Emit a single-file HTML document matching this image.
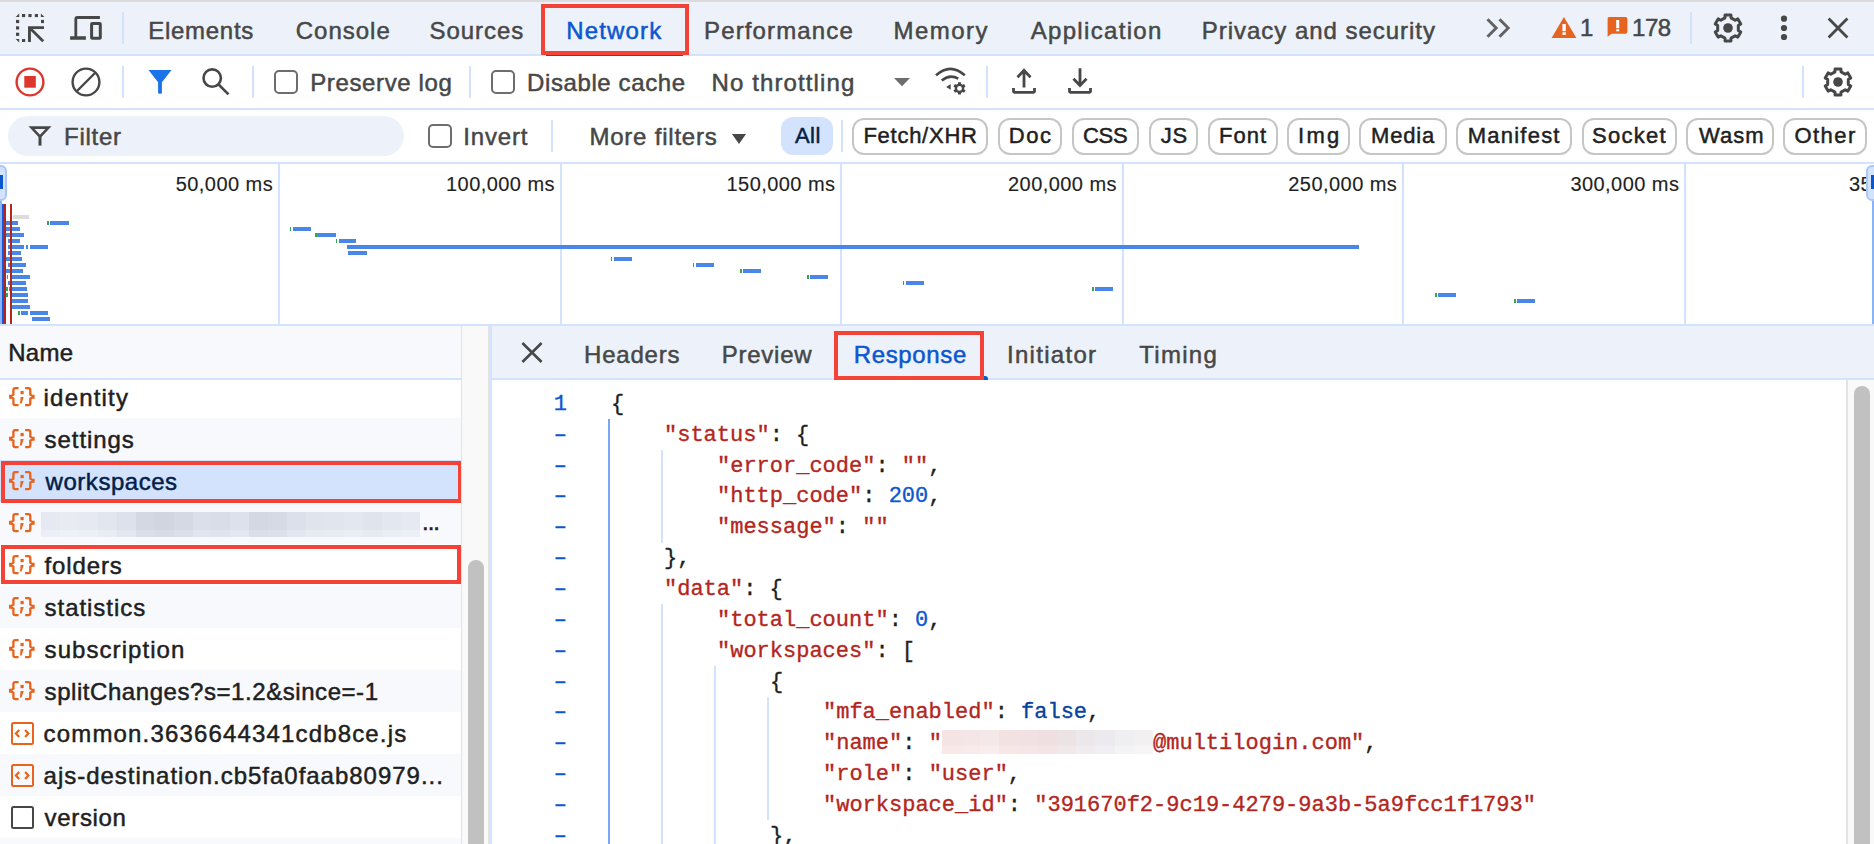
<!DOCTYPE html>
<html><head><meta charset="utf-8">
<style>
html,body{margin:0;padding:0;width:1874px;height:844px;overflow:hidden;background:#fff;}
body{position:relative;font-family:"Liberation Sans", sans-serif;}
.t{position:absolute;white-space:pre;line-height:1;font-family:"Liberation Sans", sans-serif;-webkit-text-stroke:0.5px currentColor;}
.ic{position:absolute;overflow:visible;}
.abs{position:absolute;}
.bar{position:absolute;}
.row{position:absolute;left:0;width:461px;}
.cl{position:absolute;white-space:pre;font-family:"Liberation Mono", monospace;font-size:22px;line-height:30.86px;color:#1f1f1f;-webkit-text-stroke:0.35px currentColor;}
.gl{position:absolute;left:540px;width:27px;text-align:right;font-family:"Liberation Mono", monospace;font-size:22px;line-height:30.86px;color:#0b57d0;-webkit-text-stroke:0.35px currentColor;}
.k,.s{color:#b3261e;}
.n{color:#0b57d0;}
.a{color:#0842a0;}
.p{color:#1f1f1f;}
.blur2{display:inline-block;height:24px;vertical-align:-0.5px;background:linear-gradient(90deg,#f4e4e4 0.0px 19.2px,#f4e6e6 19.2px 38.4px,#f4e8e8 38.4px 57.5px,#f2e2e2 57.5px 76.7px,#f1e1e2 76.7px 95.9px,#efdfe0 95.9px 115.1px,#ece3e5 115.1px 134.3px,#ebe7eb 134.3px 153.5px,#eceaee 153.5px 172.6px,#efeef0 172.6px 191.8px,#f3f0f2 191.8px 211.0px) 0 0/100% 16px no-repeat,linear-gradient(90deg,#f9e9e9 0.0px 19.2px,#f9ebeb 19.2px 38.4px,#f9eded 38.4px 57.5px,#f7e7e7 57.5px 76.7px,#f6e6e7 76.7px 95.9px,#f4e4e5 95.9px 115.1px,#f1e8ea 115.1px 134.3px,#f0ecf0 134.3px 153.5px,#f1eff3 153.5px 172.6px,#f4f3f5 172.6px 191.8px,#f8f5f7 191.8px 211.0px) 0 16px/100% 8px no-repeat;}
.guide{position:absolute;width:2px;}
.sep{position:absolute;width:2px;background:#d3e3fd;}
.chip{position:absolute;top:117.5px;height:37px;box-sizing:border-box;border:2px solid #c4c7c5;border-radius:12px;}
.cb{position:absolute;width:24px;height:24px;box-sizing:border-box;border:2px solid #6d6d6d;border-radius:5px;background:#fff;}
.redbox{position:absolute;box-sizing:border-box;border:4.5px solid #f44336;}
</style></head><body>
<!-- top gray line -->
<div class="abs" style="left:0;top:0;width:1874px;height:2px;background:#dcdcdc"></div>
<!-- tab bar -->
<div class="abs" style="left:0;top:2px;width:1874px;height:52px;background:#edf2fa"></div>
<div class="abs" style="left:0;top:54px;width:1874px;height:2px;background:#d3e3fd"></div>
<!-- row2 -->
<div class="abs" style="left:0;top:108px;width:1874px;height:2px;background:#d3e3fd"></div>
<!-- row3 border -->
<div class="abs" style="left:0;top:162px;width:1874px;height:2px;background:#d3e3fd"></div>
<!-- overview bottom border -->
<div class="abs" style="left:0;top:324px;width:1874px;height:2px;background:#d3e3fd"></div>

<!-- tab bar icons -->
<svg class="ic" style="left:0;top:0" width="120" height="56" viewBox="0 0 120 56" fill="#474747">
  <rect x="22" y="14" width="3.2" height="3.1"/><rect x="28.4" y="14" width="3.2" height="3.1"/><rect x="34.8" y="14" width="3.2" height="3.1"/>
  <path d="M19.2 13.6V17.1H15.7Z"/><path d="M40.9 13.6V17.1H44.4Z"/>
  <rect x="16" y="19.9" width="3.2" height="3.2"/><rect x="16" y="26.3" width="3.2" height="3.2"/><rect x="16" y="32.7" width="3.2" height="3.2"/>
  <path d="M15.7 39.1H19.2V42.6Z"/><rect x="22" y="39" width="3.2" height="3"/>
  <rect x="41" y="19.9" width="3" height="3.2"/>
  <path d="M28 26.2H44V28.9H32.8L44.2 40.2L42.2 42.2L30.9 30.9V42H28Z"/>
  <path d="M74.4 39.8V18.9Q74.4 15.9 77.4 15.9H99.9V18.9H77.2V36.2H85.9V39.8H70.1V36.2H74.4Z"/>
  <path d="M92.2 22H99.7Q101.8 22 101.8 24.1V37.7Q101.8 39.8 99.7 39.8H92.2Q90.1 39.8 90.1 37.7V24.1Q90.1 22 92.2 22ZM93.1 25V36.8H98.8V25Z"/>
</svg>
<div class="sep" style="left:122px;top:12px;height:32px"></div>
<!-- network red box + underline -->
<div class="abs" style="left:546px;top:52px;width:137px;height:4px;background:#0b57d0;border-radius:2px 2px 0 0"></div>
<div class="redbox" style="left:541px;top:4px;width:148px;height:51px"></div>
<!-- >> -->
<svg class="ic" style="left:1480px;top:14px" width="36" height="28" viewBox="0 0 36 28" fill="none" stroke="#626262" stroke-width="2.9"><path d="M7.5 5.2L16.2 14L7.5 22.8M19.5 5.2L28.2 14L19.5 22.8"/></svg>
<!-- warning -->
<svg class="ic" style="left:1551px;top:17px" width="26" height="22" viewBox="0 0 26 22"><path d="M12.9 0.1L25.4 20.9H0.6Z" fill="#e6641f"/><rect x="11.4" y="7" width="3.4" height="7.2" fill="#fff"/><rect x="11.4" y="15.3" width="3.4" height="2.6" fill="#fff"/></svg>
<!-- issue -->
<svg class="ic" style="left:1607px;top:17px" width="22" height="21" viewBox="0 0 22 21"><path d="M2 0.1H18.4Q20.4 0.1 20.4 2.1V14.8Q20.4 16.8 18.4 16.8H4.5L0.6 19.8V2.1Q0.6 0.1 2 0.1Z" fill="#e6641f"/><rect x="9.2" y="3" width="3" height="8.2" fill="#fff"/><rect x="9.2" y="12.3" width="3" height="2" fill="#fff"/></svg>
<div class="sep" style="left:1690px;top:12px;height:32px"></div>
<svg class="ic" style="left:1713px;top:13px" width="30" height="30" viewBox="0 0 30 30"><path d="M11.94 4.85 L12.08 1.92 L17.92 1.92 L18.06 4.85 L22.26 7.27 L24.86 5.93 L27.79 10.99 L25.32 12.58 L25.32 17.42 L27.79 19.01 L24.86 24.07 L22.26 22.73 L18.06 25.15 L17.92 28.08 L12.08 28.08 L11.94 25.15 L7.74 22.73 L5.14 24.07 L2.21 19.01 L4.68 17.42 L4.68 12.58 L2.21 10.99 L5.14 5.93 L7.74 7.27Z" fill="none" stroke="#474747" stroke-width="3" stroke-linejoin="round"/><circle cx="15.0" cy="15.0" r="4.8" fill="#474747"/></svg>
<svg class="ic" style="left:1774px;top:12px" width="20" height="32" viewBox="0 0 20 32" fill="#474747"><circle cx="10" cy="6.7" r="3.1"/><circle cx="10" cy="16" r="3.1"/><circle cx="10" cy="25" r="3.1"/></svg>
<svg class="ic" style="left:1824px;top:14px" width="28" height="28" viewBox="0 0 28 28" fill="none" stroke="#474747" stroke-width="2.8"><path d="M4.6 4.6L23.4 23.4M23.4 4.6L4.6 23.4"/></svg>

<!-- row 2 icons -->
<svg class="ic" style="left:14px;top:66px" width="32" height="32" viewBox="0 0 32 32"><circle cx="16" cy="16" r="13.4" fill="none" stroke="#dc362e" stroke-width="2.4"/><rect x="10.3" y="10" width="11.5" height="11.7" fill="#dc362e"/></svg>
<svg class="ic" style="left:70px;top:66px" width="32" height="32" viewBox="0 0 32 32" fill="none" stroke="#474747" stroke-width="2.4"><circle cx="16" cy="16" r="13.4"/><path d="M25.5 6.5L6.5 25.5"/></svg>
<div class="sep" style="left:122px;top:66px;height:32px"></div>
<svg class="ic" style="left:148px;top:70px" width="24" height="24" viewBox="0 0 24 24"><path d="M0.5 0H23.5L13.9 12.2V22.5Q13.9 23.7 12.7 23.7H11.3Q10.1 23.7 10.1 22.5V12.2Z" fill="#1a73e8"/></svg>
<svg class="ic" style="left:200px;top:66px" width="32" height="32" viewBox="0 0 32 32" fill="none" stroke="#474747" stroke-width="2.6"><circle cx="12.2" cy="12.1" r="8.7"/><path d="M18.6 18.5L28.5 28.3"/></svg>
<div class="sep" style="left:252px;top:66px;height:32px"></div>
<div class="cb" style="left:274px;top:70px"></div>
<div class="sep" style="left:469px;top:66px;height:32px"></div>
<div class="cb" style="left:491px;top:70px"></div>
<svg class="ic" style="left:893px;top:77px" width="18" height="10" viewBox="0 0 18 10"><path d="M1 1H17L9 9.2Z" fill="#6d6d6d"/></svg>
<svg class="ic" style="left:925px;top:60px" width="42" height="34" viewBox="925 60 42 34"><path d="M936 75.2Q950.4 62.4 964.8 75.2" fill="none" stroke="#474747" stroke-width="2.6"/><path d="M941.7 80.5Q949.8 73.8 958.3 78.6" fill="none" stroke="#474747" stroke-width="2.6"/><path d="M950.7 84L946.2 86.9L950.7 89.8Z" fill="#474747"/><path d="M958.04 83.83 L958.03 82.27 L960.97 82.27 L960.96 83.83 L962.73 84.85 L964.07 84.06 L965.54 86.61 L964.19 87.38 L964.19 89.42 L965.54 90.19 L964.07 92.74 L962.73 91.95 L960.96 92.97 L960.97 94.53 L958.03 94.53 L958.04 92.97 L956.27 91.95 L954.93 92.74 L953.46 90.19 L954.81 89.42 L954.81 87.38 L953.46 86.61 L954.93 84.06 L956.27 84.85Z" fill="#474747"/><circle cx="959.5" cy="88.4" r="2.4" fill="#fff"/></svg>
<div class="sep" style="left:986px;top:66px;height:32px"></div>
<svg class="ic" style="left:1005px;top:62px" width="95" height="38" viewBox="1005 62 95 38" fill="none" stroke="#474747" stroke-width="2.8"><path d="M1013.5 88.1V91.3Q1013.5 92.3 1014.5 92.3H1033.5Q1034.5 92.3 1034.5 91.3V88.1"/><path d="M1024 87.6V70.5M1017.5 77.2L1024 70.4L1030.5 77.2"/><path d="M1069.5 88.1V91.3Q1069.5 92.3 1070.5 92.3H1089.5Q1090.5 92.3 1090.5 91.3V88.1"/><path d="M1080 68.3V85.4M1073.5 78.7L1080 85.4L1086.5 78.7"/></svg>
<div class="sep" style="left:1802px;top:66px;height:32px"></div>
<svg class="ic" style="left:1823px;top:67px" width="30" height="30" viewBox="0 0 30 30"><path d="M11.94 4.85 L12.08 1.92 L17.92 1.92 L18.06 4.85 L22.26 7.27 L24.86 5.93 L27.79 10.99 L25.32 12.58 L25.32 17.42 L27.79 19.01 L24.86 24.07 L22.26 22.73 L18.06 25.15 L17.92 28.08 L12.08 28.08 L11.94 25.15 L7.74 22.73 L5.14 24.07 L2.21 19.01 L4.68 17.42 L4.68 12.58 L2.21 10.99 L5.14 5.93 L7.74 7.27Z" fill="none" stroke="#474747" stroke-width="3" stroke-linejoin="round"/><circle cx="15.0" cy="15.0" r="4.8" fill="#474747"/></svg>

<!-- row 3 -->
<div class="abs" style="left:8px;top:116px;width:396px;height:40px;border-radius:20px;background:#edf2fa"></div>
<svg class="ic" style="left:30px;top:126px" width="20" height="20" viewBox="0 0 20 20" fill="none" stroke="#474747" stroke-width="2.6"><path d="M1.5 1.6H18.5L10 10.6Z" stroke-linejoin="miter"/><path d="M10 10.6V19.6" stroke-width="3"/></svg>
<div class="cb" style="left:428px;top:124px"></div>
<div class="sep" style="left:551px;top:120px;height:32px"></div>
<svg class="ic" style="left:731px;top:133px" width="16" height="12" viewBox="0 0 16 12"><path d="M1 1H15L8 11Z" fill="#474747"/></svg>
<div class="abs" style="left:781px;top:117px;width:52px;height:38px;border-radius:12px;background:#d3e3fd"></div>
<div class="sep" style="left:841px;top:120px;height:32px"></div>
<div class="chip" style="left:851.7px;width:136.7px"></div><div class="chip" style="left:997.6px;width:64.4px"></div><div class="chip" style="left:1071.7px;width:67.3px"></div><div class="chip" style="left:1148.5px;width:49.5px"></div><div class="chip" style="left:1207.6px;width:70.8px"></div><div class="chip" style="left:1287.3px;width:62.7px"></div><div class="chip" style="left:1359.4px;width:88.0px"></div><div class="chip" style="left:1456.3px;width:116.0px"></div><div class="chip" style="left:1581.7px;width:95.3px"></div><div class="chip" style="left:1686.3px;width:87.7px"></div><div class="chip" style="left:1783.0px;width:84.2px"></div>

<!-- overview grid -->
<div class="abs" style="left:278px;top:164px;width:2px;height:160px;background:#d3e3fd"></div><div class="abs" style="left:560px;top:164px;width:2px;height:160px;background:#d3e3fd"></div><div class="abs" style="left:840px;top:164px;width:2px;height:160px;background:#d3e3fd"></div><div class="abs" style="left:1122px;top:164px;width:2px;height:160px;background:#d3e3fd"></div><div class="abs" style="left:1402px;top:164px;width:2px;height:160px;background:#d3e3fd"></div><div class="abs" style="left:1684px;top:164px;width:2px;height:160px;background:#d3e3fd"></div>
<span class="t" style="left:1849px;top:174.1px;font-size:20px;color:#1f1f1f;letter-spacing:0.45px;-webkit-text-stroke:0.15px currentColor">35</span>
<!-- overview handles -->
<div class="abs" style="left:-8px;top:164.5px;width:15px;height:36px;box-sizing:border-box;border:2px solid #a8c7fa;border-radius:6px;background:#d3e3fd"></div>
<div class="abs" style="left:0;top:175px;width:2.5px;height:14px;background:#0b57d0"></div>
<div class="abs" style="left:1866px;top:164.5px;width:16px;height:36px;box-sizing:border-box;border:2px solid #a8c7fa;border-radius:6px;background:#d3e3fd"></div>
<div class="abs" style="left:1871px;top:175px;width:3px;height:14px;background:#0b57d0"></div>
<div class="abs" style="left:1871.5px;top:201px;width:2.5px;height:123px;background:#8ab4f8"></div>
<div class="abs" style="left:0;top:201px;width:2px;height:123px;background:#8ab4f8"></div>
<div class="abs" style="left:2px;top:204px;width:2.2px;height:120px;background:#1a56db"></div>
<div class="abs" style="left:4.2px;top:204px;width:1.6px;height:120px;background:#b3261e"></div>
<div class="bar" style="left:12.6px;top:214.9px;width:16.7px;height:4px;background:#dcdcdc"></div>
<div class="bar" style="left:5.7px;top:220.9px;width:12.0px;height:4px;background:#4a86e8"></div>
<div class="bar" style="left:50.0px;top:220.9px;width:18.6px;height:4px;background:#4a86e8"></div>
<div class="bar" style="left:5.7px;top:226.7px;width:14.3px;height:4px;background:#4a86e8"></div>
<div class="bar" style="left:6.2px;top:232.9px;width:18.1px;height:4px;background:#4a86e8"></div>
<div class="bar" style="left:8.0px;top:238.9px;width:12.0px;height:4px;background:#4a86e8"></div>
<div class="bar" style="left:8.0px;top:244.9px;width:16.3px;height:4px;background:#4a86e8"></div>
<div class="bar" style="left:26.2px;top:244.9px;width:2.0px;height:4px;background:#4a86e8"></div>
<div class="bar" style="left:30.0px;top:244.9px;width:17.8px;height:4px;background:#4a86e8"></div>
<div class="bar" style="left:8.0px;top:251.0px;width:13.3px;height:4px;background:#4a86e8"></div>
<div class="bar" style="left:5.7px;top:256.9px;width:15.9px;height:4px;background:#4a86e8"></div>
<div class="bar" style="left:7.7px;top:262.8px;width:18.2px;height:4px;background:#4a86e8"></div>
<div class="bar" style="left:5.7px;top:268.8px;width:17.7px;height:4px;background:#4a86e8"></div>
<div class="bar" style="left:6.5px;top:274.8px;width:1.5px;height:4px;background:#4a86e8"></div>
<div class="bar" style="left:11.6px;top:274.8px;width:18.1px;height:4px;background:#4a86e8"></div>
<div class="bar" style="left:8.0px;top:281.0px;width:17.9px;height:4px;background:#4a86e8"></div>
<div class="bar" style="left:9.0px;top:287.0px;width:18.0px;height:4px;background:#4a86e8"></div>
<div class="bar" style="left:11.6px;top:293.0px;width:16.4px;height:4px;background:#4a86e8"></div>
<div class="bar" style="left:11.6px;top:299.0px;width:16.9px;height:4px;background:#4a86e8"></div>
<div class="bar" style="left:9.6px;top:304.9px;width:20.9px;height:4px;background:#4a86e8"></div>
<div class="bar" style="left:20.8px;top:311.0px;width:6.9px;height:4px;background:#4a86e8"></div>
<div class="bar" style="left:29.7px;top:311.0px;width:18.1px;height:4px;background:#4a86e8"></div>
<div class="bar" style="left:31.6px;top:316.9px;width:18.2px;height:4px;background:#4a86e8"></div>
<div class="bar" style="left:47.0px;top:220.9px;width:2.0px;height:4px;background:#34a853"></div>
<div class="bar" style="left:5.7px;top:287.0px;width:2.0px;height:4px;background:#34a853"></div>
<div class="bar" style="left:5.7px;top:293.0px;width:2.0px;height:4px;background:#34a853"></div>
<div class="bar" style="left:18.0px;top:311.0px;width:2.0px;height:4px;background:#34a853"></div>
<div class="bar" style="left:289.8px;top:226.8px;width:1.5px;height:4px;background:#34a853"></div>
<div class="bar" style="left:293.0px;top:226.8px;width:18.0px;height:4px;background:#4a86e8"></div>
<div class="bar" style="left:315.4px;top:233.0px;width:1.5px;height:4px;background:#34a853"></div>
<div class="bar" style="left:317.0px;top:233.0px;width:18.6px;height:4px;background:#4a86e8"></div>
<div class="bar" style="left:335.6px;top:238.7px;width:1.5px;height:4px;background:#34a853"></div>
<div class="bar" style="left:338.5px;top:238.7px;width:17.5px;height:4px;background:#4a86e8"></div>
<div class="bar" style="left:610.6px;top:256.6px;width:1.5px;height:4px;background:#34a853"></div>
<div class="bar" style="left:613.8px;top:256.6px;width:18.6px;height:4px;background:#4a86e8"></div>
<div class="bar" style="left:692.9px;top:262.7px;width:1.5px;height:4px;background:#34a853"></div>
<div class="bar" style="left:696.0px;top:262.7px;width:18.3px;height:4px;background:#4a86e8"></div>
<div class="bar" style="left:740.0px;top:268.8px;width:1.5px;height:4px;background:#34a853"></div>
<div class="bar" style="left:743.0px;top:268.8px;width:18.0px;height:4px;background:#4a86e8"></div>
<div class="bar" style="left:807.0px;top:274.9px;width:1.5px;height:4px;background:#34a853"></div>
<div class="bar" style="left:810.4px;top:274.9px;width:17.9px;height:4px;background:#4a86e8"></div>
<div class="bar" style="left:902.6px;top:281.0px;width:1.5px;height:4px;background:#34a853"></div>
<div class="bar" style="left:905.8px;top:281.0px;width:18.2px;height:4px;background:#4a86e8"></div>
<div class="bar" style="left:1092.0px;top:287.0px;width:1.5px;height:4px;background:#34a853"></div>
<div class="bar" style="left:1095.4px;top:287.0px;width:17.9px;height:4px;background:#4a86e8"></div>
<div class="bar" style="left:1435.0px;top:292.9px;width:1.5px;height:4px;background:#34a853"></div>
<div class="bar" style="left:1437.9px;top:292.9px;width:18.5px;height:4px;background:#4a86e8"></div>
<div class="bar" style="left:1514.0px;top:298.6px;width:1.5px;height:4px;background:#34a853"></div>
<div class="bar" style="left:1517.0px;top:298.6px;width:18.2px;height:4px;background:#4a86e8"></div>
<div class="bar" style="left:346.8px;top:244.8px;width:1011.8px;height:4px;background:#4a86e8"></div>
<div class="bar" style="left:348.4px;top:250.9px;width:18.9px;height:4px;background:#4a86e8"></div>
<div class="abs" style="left:9.8px;top:204px;width:2px;height:120px;background:#b3261e"></div>

<!-- lower: left pane -->
<div class="abs" style="left:0;top:326px;width:461px;height:52px;background:#f8f9fc"></div>
<div class="abs" style="left:0;top:378px;width:461px;height:2px;background:#d3e3fd"></div>
<div class="row" style="top:380px;height:38px;background:#ffffff"></div>
<div class="row" style="top:418px;height:42px;background:#f8f9fc"></div>
<div class="row" style="top:460px;height:42px;background:#d3e3fd"></div>
<div class="row" style="top:502px;height:42px;background:#f8f9fc"></div>
<div class="row" style="top:544px;height:42px;background:#ffffff"></div>
<div class="row" style="top:586px;height:42px;background:#f8f9fc"></div>
<div class="row" style="top:628px;height:42px;background:#ffffff"></div>
<div class="row" style="top:670px;height:42px;background:#f8f9fc"></div>
<div class="row" style="top:712px;height:42px;background:#ffffff"></div>
<div class="row" style="top:754px;height:42px;background:#f8f9fc"></div>
<div class="row" style="top:796px;height:42px;background:#ffffff"></div>
<div class="row" style="top:838px;height:42px;background:#f8f9fc"></div>
<div class="abs" style="left:41px;top:512px;width:379px;height:18px;background:linear-gradient(90deg,#e6e9f1 0.0px 18.9px,#e8ebf2 18.9px 37.9px,#e6e9f1 37.9px 56.8px,#e2e6ee 56.8px 75.8px,#dde1eb 75.8px 94.8px,#d3d8e3 94.8px 113.7px,#d0d5e0 113.7px 132.7px,#d4d9e4 132.7px 151.6px,#dadfe9 151.6px 170.5px,#d8dde7 170.5px 189.5px,#dde1eb 189.5px 208.4px,#d3d8e3 208.4px 227.4px,#d5dae5 227.4px 246.3px,#dce0ea 246.3px 265.3px,#e0e4ed 265.3px 284.2px,#e1e5ee 284.2px 303.2px,#e3e7ef 303.2px 322.1px,#e0e4ed 322.1px 341.1px,#e3e7ef 341.1px 360.1px,#e6e9f1 360.1px 379.0px)"></div><div class="abs" style="left:41px;top:530px;width:379px;height:7px;background:linear-gradient(90deg,#eceff7 0.0px 18.9px,#eef1f8 18.9px 37.9px,#eceff7 37.9px 56.8px,#e8ecf4 56.8px 75.8px,#e3e7f1 75.8px 94.8px,#d9dee9 94.8px 113.7px,#d6dbe6 113.7px 132.7px,#dadfea 132.7px 151.6px,#e0e5ef 151.6px 170.5px,#dee3ed 170.5px 189.5px,#e3e7f1 189.5px 208.4px,#d9dee9 208.4px 227.4px,#dbe0eb 227.4px 246.3px,#e2e6f0 246.3px 265.3px,#e6eaf3 265.3px 284.2px,#e7ebf4 284.2px 303.2px,#e9edf5 303.2px 322.1px,#e6eaf3 322.1px 341.1px,#e9edf5 341.1px 360.1px,#eceff7 360.1px 379.0px)"></div>
<span class="t" style="left:422px;top:510px;font-size:24px;color:#1f1f1f;letter-spacing:-1px">...</span>
<div class="redbox" style="left:1px;top:461px;width:460.5px;height:41.5px"></div>
<div class="redbox" style="left:1px;top:544.5px;width:459.5px;height:39.5px"></div>
<svg class="ic" style="left:9.2px;top:387.2px" width="26" height="20" viewBox="0 0 26 20" fill="none" stroke="#e8631c" stroke-width="2.3"><path d="M9.6 1.2H6.2Q4.4 1.2 4.4 3V7.7L2.4 8.9H1.2V10.5H2.4L4.4 11.7V16.3Q4.4 18.1 6.2 18.1H9.6" /><path d="M16.1 1.2H19.5Q21.3 1.2 21.3 3V7.7L23.3 8.9H24.5V10.5H23.3L21.3 11.7V16.3Q21.3 18.1 19.5 18.1H16.1"/><rect x="11.5" y="3.9" width="3.2" height="3.3" fill="#e8631c" stroke="none"/><path d="M11.6 10.1H14.7L12.6 16.5H11Z" fill="#e8631c" stroke="none"/></svg>
<svg class="ic" style="left:9.2px;top:429.2px" width="26" height="20" viewBox="0 0 26 20" fill="none" stroke="#e8631c" stroke-width="2.3"><path d="M9.6 1.2H6.2Q4.4 1.2 4.4 3V7.7L2.4 8.9H1.2V10.5H2.4L4.4 11.7V16.3Q4.4 18.1 6.2 18.1H9.6" /><path d="M16.1 1.2H19.5Q21.3 1.2 21.3 3V7.7L23.3 8.9H24.5V10.5H23.3L21.3 11.7V16.3Q21.3 18.1 19.5 18.1H16.1"/><rect x="11.5" y="3.9" width="3.2" height="3.3" fill="#e8631c" stroke="none"/><path d="M11.6 10.1H14.7L12.6 16.5H11Z" fill="#e8631c" stroke="none"/></svg>
<svg class="ic" style="left:9.2px;top:471.2px" width="26" height="20" viewBox="0 0 26 20" fill="none" stroke="#e8631c" stroke-width="2.3"><path d="M9.6 1.2H6.2Q4.4 1.2 4.4 3V7.7L2.4 8.9H1.2V10.5H2.4L4.4 11.7V16.3Q4.4 18.1 6.2 18.1H9.6" /><path d="M16.1 1.2H19.5Q21.3 1.2 21.3 3V7.7L23.3 8.9H24.5V10.5H23.3L21.3 11.7V16.3Q21.3 18.1 19.5 18.1H16.1"/><rect x="11.5" y="3.9" width="3.2" height="3.3" fill="#e8631c" stroke="none"/><path d="M11.6 10.1H14.7L12.6 16.5H11Z" fill="#e8631c" stroke="none"/></svg>
<svg class="ic" style="left:9.2px;top:513.2px" width="26" height="20" viewBox="0 0 26 20" fill="none" stroke="#e8631c" stroke-width="2.3"><path d="M9.6 1.2H6.2Q4.4 1.2 4.4 3V7.7L2.4 8.9H1.2V10.5H2.4L4.4 11.7V16.3Q4.4 18.1 6.2 18.1H9.6" /><path d="M16.1 1.2H19.5Q21.3 1.2 21.3 3V7.7L23.3 8.9H24.5V10.5H23.3L21.3 11.7V16.3Q21.3 18.1 19.5 18.1H16.1"/><rect x="11.5" y="3.9" width="3.2" height="3.3" fill="#e8631c" stroke="none"/><path d="M11.6 10.1H14.7L12.6 16.5H11Z" fill="#e8631c" stroke="none"/></svg>
<svg class="ic" style="left:9.2px;top:555.2px" width="26" height="20" viewBox="0 0 26 20" fill="none" stroke="#e8631c" stroke-width="2.3"><path d="M9.6 1.2H6.2Q4.4 1.2 4.4 3V7.7L2.4 8.9H1.2V10.5H2.4L4.4 11.7V16.3Q4.4 18.1 6.2 18.1H9.6" /><path d="M16.1 1.2H19.5Q21.3 1.2 21.3 3V7.7L23.3 8.9H24.5V10.5H23.3L21.3 11.7V16.3Q21.3 18.1 19.5 18.1H16.1"/><rect x="11.5" y="3.9" width="3.2" height="3.3" fill="#e8631c" stroke="none"/><path d="M11.6 10.1H14.7L12.6 16.5H11Z" fill="#e8631c" stroke="none"/></svg>
<svg class="ic" style="left:9.2px;top:597.2px" width="26" height="20" viewBox="0 0 26 20" fill="none" stroke="#e8631c" stroke-width="2.3"><path d="M9.6 1.2H6.2Q4.4 1.2 4.4 3V7.7L2.4 8.9H1.2V10.5H2.4L4.4 11.7V16.3Q4.4 18.1 6.2 18.1H9.6" /><path d="M16.1 1.2H19.5Q21.3 1.2 21.3 3V7.7L23.3 8.9H24.5V10.5H23.3L21.3 11.7V16.3Q21.3 18.1 19.5 18.1H16.1"/><rect x="11.5" y="3.9" width="3.2" height="3.3" fill="#e8631c" stroke="none"/><path d="M11.6 10.1H14.7L12.6 16.5H11Z" fill="#e8631c" stroke="none"/></svg>
<svg class="ic" style="left:9.2px;top:639.2px" width="26" height="20" viewBox="0 0 26 20" fill="none" stroke="#e8631c" stroke-width="2.3"><path d="M9.6 1.2H6.2Q4.4 1.2 4.4 3V7.7L2.4 8.9H1.2V10.5H2.4L4.4 11.7V16.3Q4.4 18.1 6.2 18.1H9.6" /><path d="M16.1 1.2H19.5Q21.3 1.2 21.3 3V7.7L23.3 8.9H24.5V10.5H23.3L21.3 11.7V16.3Q21.3 18.1 19.5 18.1H16.1"/><rect x="11.5" y="3.9" width="3.2" height="3.3" fill="#e8631c" stroke="none"/><path d="M11.6 10.1H14.7L12.6 16.5H11Z" fill="#e8631c" stroke="none"/></svg>
<svg class="ic" style="left:9.2px;top:681.2px" width="26" height="20" viewBox="0 0 26 20" fill="none" stroke="#e8631c" stroke-width="2.3"><path d="M9.6 1.2H6.2Q4.4 1.2 4.4 3V7.7L2.4 8.9H1.2V10.5H2.4L4.4 11.7V16.3Q4.4 18.1 6.2 18.1H9.6" /><path d="M16.1 1.2H19.5Q21.3 1.2 21.3 3V7.7L23.3 8.9H24.5V10.5H23.3L21.3 11.7V16.3Q21.3 18.1 19.5 18.1H16.1"/><rect x="11.5" y="3.9" width="3.2" height="3.3" fill="#e8631c" stroke="none"/><path d="M11.6 10.1H14.7L12.6 16.5H11Z" fill="#e8631c" stroke="none"/></svg>
<svg class="ic" style="left:10px;top:722px" width="24" height="24" viewBox="0 0 24 24" fill="none" stroke="#e8631c" stroke-width="2"><rect x="2" y="1" width="21" height="21" rx="1.5"/><path d="M9.2 8L5.9 11.5L9.2 15M15.1 8L18.4 11.5L15.1 15" stroke-width="2.2"/></svg>
<svg class="ic" style="left:10px;top:764px" width="24" height="24" viewBox="0 0 24 24" fill="none" stroke="#e8631c" stroke-width="2"><rect x="2" y="1" width="21" height="21" rx="1.5"/><path d="M9.2 8L5.9 11.5L9.2 15M15.1 8L18.4 11.5L15.1 15" stroke-width="2.2"/></svg>
<svg class="ic" style="left:10px;top:806px" width="24" height="24" viewBox="0 0 24 24" fill="none" stroke="#474747" stroke-width="2"><rect x="2" y="1" width="21" height="21" rx="1.5"/></svg>
<!-- left scrollbar -->
<div class="abs" style="left:460.5px;top:326px;width:1.5px;height:518px;background:#e3e3e3"></div>
<div class="abs" style="left:462px;top:326px;width:26px;height:518px;background:#f9f9f9"></div>
<div class="abs" style="left:468px;top:560px;width:16px;height:300px;border-radius:8px;background:#c1c1c1"></div>
<div class="abs" style="left:488px;top:326px;width:1.5px;height:518px;background:#e3e3e3"></div>
<div class="abs" style="left:489.7px;top:326px;width:2.5px;height:518px;background:#d3e3fd"></div>

<!-- right pane -->
<div class="abs" style="left:492px;top:326px;width:1382px;height:52px;background:#edf2fa"></div>
<div class="abs" style="left:492px;top:378px;width:1382px;height:2px;background:#d3e3fd"></div>
<svg class="ic" style="left:518px;top:339px" width="28" height="26" viewBox="0 0 28 26" fill="none" stroke="#474747" stroke-width="2.6"><path d="M4.4 4L23.6 23M23.6 4L4.4 23"/></svg>
<div class="abs" style="left:839px;top:376px;width:149px;height:4px;background:#0b57d0;border-radius:3px 3px 0 0"></div>
<div class="redbox" style="left:834.4px;top:331px;width:149.4px;height:49.4px;border-width:4.9px"></div>
<div class="guide" style="left:607.5px;top:419.2px;height:424.8px;background:#7aa7f5"></div>
<div class="guide" style="left:660.5px;top:450.0px;height:92.6px;background:#d3e3fd"></div>
<div class="guide" style="left:660.5px;top:604.3px;height:239.7px;background:#d3e3fd"></div>
<div class="guide" style="left:713.5px;top:666.0px;height:178.0px;background:#d3e3fd"></div>
<div class="guide" style="left:766.5px;top:696.9px;height:123.4px;background:#d3e3fd"></div>
<div class="cl" style="top:389.80px;left:611.00px"><span class="p">{</span></div>
<div class="gl" style="top:389.80px">1</div>
<div class="cl" style="top:420.66px;left:664.00px"><span class="k">"status"</span><span class="p">: {</span></div>
<div class="gl" style="top:420.66px">–</div>
<div class="cl" style="top:451.52px;left:717.00px"><span class="k">"error_code"</span><span class="p">: </span><span class="s">""</span><span class="p">,</span></div>
<div class="gl" style="top:451.52px">–</div>
<div class="cl" style="top:482.38px;left:717.00px"><span class="k">"http_code"</span><span class="p">: </span><span class="n">200</span><span class="p">,</span></div>
<div class="gl" style="top:482.38px">–</div>
<div class="cl" style="top:513.24px;left:717.00px"><span class="k">"message"</span><span class="p">: </span><span class="s">""</span></div>
<div class="gl" style="top:513.24px">–</div>
<div class="cl" style="top:544.10px;left:664.00px"><span class="p">},</span></div>
<div class="gl" style="top:544.10px">–</div>
<div class="cl" style="top:574.96px;left:664.00px"><span class="k">"data"</span><span class="p">: {</span></div>
<div class="gl" style="top:574.96px">–</div>
<div class="cl" style="top:605.82px;left:717.00px"><span class="k">"total_count"</span><span class="p">: </span><span class="n">0</span><span class="p">,</span></div>
<div class="gl" style="top:605.82px">–</div>
<div class="cl" style="top:636.68px;left:717.00px"><span class="k">"workspaces"</span><span class="p">: [</span></div>
<div class="gl" style="top:636.68px">–</div>
<div class="cl" style="top:667.54px;left:770.00px"><span class="p">{</span></div>
<div class="gl" style="top:667.54px">–</div>
<div class="cl" style="top:698.40px;left:823.00px"><span class="k">"mfa_enabled"</span><span class="p">: </span><span class="a">false</span><span class="p">,</span></div>
<div class="gl" style="top:698.40px">–</div>
<div class="cl" style="top:729.26px;left:823.00px"><span class="k">"name"</span><span class="p">: </span><span class="s">"</span><span class="blur2">                </span><span class="s">@multilogin.com"</span><span class="p">,</span></div>
<div class="gl" style="top:729.26px">–</div>
<div class="cl" style="top:760.12px;left:823.00px"><span class="k">"role"</span><span class="p">: </span><span class="s">"user"</span><span class="p">,</span></div>
<div class="gl" style="top:760.12px">–</div>
<div class="cl" style="top:790.98px;left:823.00px"><span class="k">"workspace_id"</span><span class="p">: </span><span class="s">"391670f2-9c19-4279-9a3b-5a9fcc1f1793"</span></div>
<div class="gl" style="top:790.98px">–</div>
<div class="cl" style="top:821.84px;left:770.00px"><span class="p">},</span></div>
<div class="gl" style="top:821.84px">–</div>
<!-- right scrollbar -->
<div class="abs" style="left:1846.4px;top:380px;width:2px;height:464px;background:#e3e3e3"></div>
<div class="abs" style="left:1848.4px;top:380px;width:25.6px;height:464px;background:#f9f9f9"></div>
<div class="abs" style="left:1853.8px;top:385.7px;width:16.4px;height:500px;border-radius:8px;background:#c1c1c1"></div>

<span class="t" style="top:19.0px;font-size:24px;color:#474747;letter-spacing:0.71px;left:148.3px;">Elements</span>
<span class="t" style="top:19.0px;font-size:24px;color:#474747;letter-spacing:0.98px;left:295.8px;">Console</span>
<span class="t" style="top:19.0px;font-size:24px;color:#474747;letter-spacing:0.93px;left:429.6px;">Sources</span>
<span class="t" style="top:19.0px;font-size:24px;color:#474747;letter-spacing:1.14px;left:704.0px;">Performance</span>
<span class="t" style="top:19.0px;font-size:24px;color:#474747;letter-spacing:1.43px;left:893.6px;">Memory</span>
<span class="t" style="top:19.0px;font-size:24px;color:#474747;letter-spacing:1.32px;left:1030.7px;">Application</span>
<span class="t" style="top:19.0px;font-size:24px;color:#474747;letter-spacing:0.97px;left:1201.8px;">Privacy and security</span>
<span class="t" style="top:19.0px;font-size:24px;color:#0b57d0;letter-spacing:1.15px;left:566.3px;">Network</span>
<span class="t" style="top:16.4px;font-size:24px;color:#474747;left:1579.9px;">1</span>
<span class="t" style="top:16.4px;font-size:24px;color:#474747;letter-spacing:-0.45px;left:1632.0px;">178</span>
<span class="t" style="top:70.5px;font-size:24px;color:#474747;letter-spacing:0.63px;left:310.2px;">Preserve log</span>
<span class="t" style="top:70.5px;font-size:24px;color:#474747;letter-spacing:0.61px;left:527.0px;">Disable cache</span>
<span class="t" style="top:70.5px;font-size:24px;color:#474747;letter-spacing:1.12px;left:711.5px;">No throttling</span>
<span class="t" style="top:124.6px;font-size:24px;color:#474747;letter-spacing:0.73px;left:64.0px;">Filter</span>
<span class="t" style="top:124.6px;font-size:24px;color:#474747;letter-spacing:0.85px;left:463.2px;">Invert</span>
<span class="t" style="top:124.6px;font-size:24px;color:#474747;letter-spacing:0.79px;left:589.4px;">More filters</span>
<span class="t" style="top:125.2px;font-size:22px;color:#041e49;letter-spacing:0.42px;left:795.0px;">All</span>
<span class="t" style="top:125.2px;font-size:22px;color:#1f1f1f;letter-spacing:0.74px;left:863.4px;">Fetch/XHR</span>
<span class="t" style="top:125.2px;font-size:22px;color:#1f1f1f;letter-spacing:1.49px;left:1008.8px;">Doc</span>
<span class="t" style="top:125.2px;font-size:22px;color:#1f1f1f;letter-spacing:-0.28px;left:1083.0px;">CSS</span>
<span class="t" style="top:125.2px;font-size:22px;color:#1f1f1f;letter-spacing:0.60px;left:1160.8px;">JS</span>
<span class="t" style="top:125.2px;font-size:22px;color:#1f1f1f;letter-spacing:1.03px;left:1219.0px;">Font</span>
<span class="t" style="top:125.2px;font-size:22px;color:#1f1f1f;letter-spacing:2.28px;left:1298.0px;">Img</span>
<span class="t" style="top:125.2px;font-size:22px;color:#1f1f1f;letter-spacing:0.83px;left:1371.0px;">Media</span>
<span class="t" style="top:125.2px;font-size:22px;color:#1f1f1f;letter-spacing:1.22px;left:1467.8px;">Manifest</span>
<span class="t" style="top:125.2px;font-size:22px;color:#1f1f1f;letter-spacing:1.25px;left:1592.0px;">Socket</span>
<span class="t" style="top:125.2px;font-size:22px;color:#1f1f1f;letter-spacing:1.04px;left:1699.0px;">Wasm</span>
<span class="t" style="top:125.2px;font-size:22px;color:#1f1f1f;letter-spacing:1.48px;left:1794.4px;">Other</span>
<span class="t" style="top:174.1px;font-size:20px;color:#1f1f1f;-webkit-text-stroke:0.15px currentColor;letter-spacing:0.45px;right:1600.9px;">50,000 ms</span>
<span class="t" style="top:174.1px;font-size:20px;color:#1f1f1f;-webkit-text-stroke:0.15px currentColor;letter-spacing:0.45px;right:1319.0px;">100,000 ms</span>
<span class="t" style="top:174.1px;font-size:20px;color:#1f1f1f;-webkit-text-stroke:0.15px currentColor;letter-spacing:0.45px;right:1038.5px;">150,000 ms</span>
<span class="t" style="top:174.1px;font-size:20px;color:#1f1f1f;-webkit-text-stroke:0.15px currentColor;letter-spacing:0.45px;right:757.0px;">200,000 ms</span>
<span class="t" style="top:174.1px;font-size:20px;color:#1f1f1f;-webkit-text-stroke:0.15px currentColor;letter-spacing:0.45px;right:476.7px;">250,000 ms</span>
<span class="t" style="top:174.1px;font-size:20px;color:#1f1f1f;-webkit-text-stroke:0.15px currentColor;letter-spacing:0.45px;right:194.6px;">300,000 ms</span>
<span class="t" style="top:340.5px;font-size:24px;color:#1f1f1f;letter-spacing:0.31px;left:8.2px;">Name</span>
<span class="t" style="top:385.6px;font-size:24px;color:#1f1f1f;letter-spacing:1.19px;left:43.6px;">identity</span>
<span class="t" style="top:427.6px;font-size:24px;color:#1f1f1f;letter-spacing:0.93px;left:44.6px;">settings</span>
<span class="t" style="top:469.6px;font-size:24px;color:#041e49;letter-spacing:0.53px;left:45.6px;">workspaces</span>
<span class="t" style="top:553.6px;font-size:24px;color:#1f1f1f;letter-spacing:0.86px;left:44.6px;">folders</span>
<span class="t" style="top:595.6px;font-size:24px;color:#1f1f1f;letter-spacing:0.95px;left:44.6px;">statistics</span>
<span class="t" style="top:637.6px;font-size:24px;color:#1f1f1f;letter-spacing:1.06px;left:44.6px;">subscription</span>
<span class="t" style="top:679.6px;font-size:24px;color:#1f1f1f;letter-spacing:0.56px;left:44.6px;">splitChanges?s=1.2&amp;since=-1</span>
<span class="t" style="top:721.6px;font-size:24px;color:#1f1f1f;letter-spacing:1.16px;left:43.6px;">common.3636644341cdb8ce.js</span>
<span class="t" style="top:763.6px;font-size:24px;color:#1f1f1f;letter-spacing:0.98px;left:43.6px;">ajs-destination.cb5fa0faab80979...</span>
<span class="t" style="top:805.6px;font-size:24px;color:#1f1f1f;letter-spacing:0.65px;left:44.6px;">version</span>
<span class="t" style="top:342.8px;font-size:24px;color:#474747;letter-spacing:0.80px;left:584.0px;">Headers</span>
<span class="t" style="top:342.8px;font-size:24px;color:#474747;letter-spacing:0.76px;left:721.7px;">Preview</span>
<span class="t" style="top:342.8px;font-size:24px;color:#474747;letter-spacing:1.29px;left:1007.0px;">Initiator</span>
<span class="t" style="top:342.8px;font-size:24px;color:#474747;letter-spacing:1.31px;left:1139.2px;">Timing</span>
<span class="t" style="top:342.8px;font-size:24px;color:#0b57d0;letter-spacing:0.64px;left:853.7px;">Response</span>
</body></html>
